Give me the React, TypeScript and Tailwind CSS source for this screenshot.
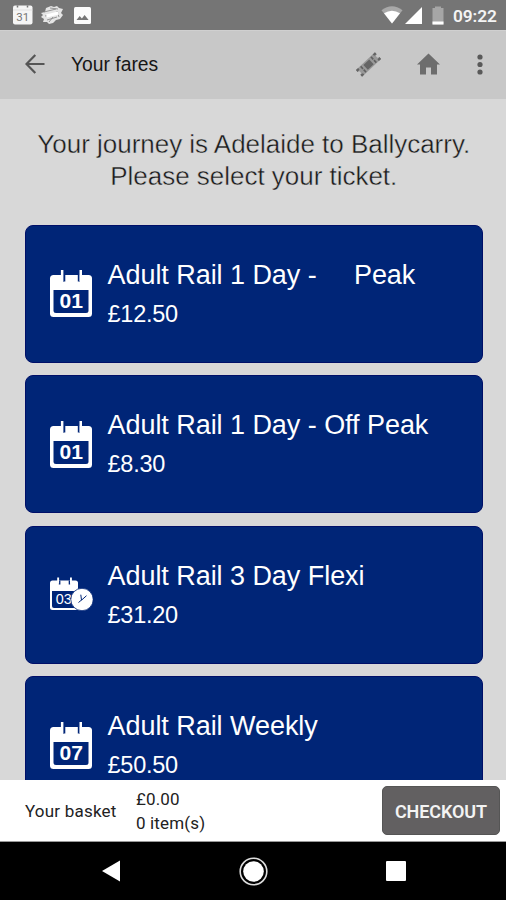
import React from "react";

const sans = "font-['Liberation_Sans',Arial,sans-serif]";
const roboto = "font-[Roboto,sans-serif]";

type Ticket = { name: string; price: string; days: string; flexi?: boolean };

const tickets: Ticket[] = [
  { name: "Adult Rail 1 Day -\u00a0\u00a0\u00a0\u00a0\u00a0Peak", price: "£12.50", days: "01" },
  { name: "Adult Rail 1 Day - Off Peak", price: "£8.30", days: "01" },
  { name: "Adult Rail 3 Day Flexi", price: "£31.20", days: "03", flexi: true },
  { name: "Adult Rail Weekly", price: "£50.50", days: "07" },
];

function CalendarIcon({ days }: { days: string }) {
  return (
    <svg width="44" height="48" viewBox="0 0 44 48">
      <rect x="1" y="5" width="42" height="42" rx="3.500" fill="#fff" />
      <path d="M4.500 20h35v20.500a2.500 2.500 0 0 1-2.500 2.500h-30a2.500 2.500 0 0 1-2.500-2.500z" fill="#002577" />
      <path d="M14 5h2.300v6.500h-2.300zM28.800 5h2v6.500h-2z" fill="#002577" />
      <path d="M11.900 0h2.500v11h-2.500zM30.500 0h2.500v11h-2.500z" fill="#fff" />
      <text x="22.300" y="38" textAnchor="middle" fill="#fff" fontSize="21" fontWeight="700" textLength="23.500" lengthAdjust="spacingAndGlyphs" className={sans}>
        {days}
      </text>
    </svg>
  );
}

function FlexiIcon({ days }: { days: string }) {
  return (
    <svg width="44" height="48" viewBox="0 0 44 48">
      <rect x="1" y="9.500" width="28" height="29.500" rx="2.500" fill="#fff" />
      <path d="M3 20h24v15a2 2 0 0 1-2 2h-20a2 2 0 0 1-2-2z" fill="#002577" />
      <path d="M9.800 9.500h1.600v4h-1.600zM19.700 9.500h1.400v4h-1.400z" fill="#002577" />
      <path d="M8.200 6.500h1.900v6h-1.900zM21 6.500h1.900v6h-1.900z" fill="#fff" />
      <text x="14.800" y="33" textAnchor="middle" fill="#fff" fontSize="14.500" textLength="16" lengthAdjust="spacingAndGlyphs" className={sans}>
        {days}
      </text>
      <circle cx="33" cy="28.500" r="11.200" fill="#fff" stroke="#002577" strokeWidth="0.800" />
      <path d="M31.800 23.700l.7 5.500L37.500 24.700M32.500 29l-3 2.500" fill="none" stroke="#002577" strokeWidth="1" />
    </svg>
  );
}

function TicketCard({ ticket }: { ticket: Ticket }) {
  return (
    <button className="flex h-[138px] w-full shrink-0 items-start rounded-lg border border-[#000f68] bg-[#002577] text-left text-white">
      <span className="mt-[44.5px] ml-[23px] block">
        {ticket.flexi ? <FlexiIcon days={ticket.days} /> : <CalendarIcon days={ticket.days} />}
      </span>
      <span className={`mt-[32px] ml-[15px] block whitespace-nowrap ${sans}`}>
        <span className="block text-[27px] leading-[34px] tracking-[-0.05px]">{ticket.name}</span>
        <span className="mt-[6px] block text-[23.5px] leading-[32px] tracking-[-0.25px]">{ticket.price}</span>
      </span>
    </button>
  );
}

function StatusBar() {
  return (
    <div className="flex h-[30px] shrink-0 items-center bg-[#757575] pr-[9px] pl-[13px] text-[#f4f4f4]">
      <svg width="20" height="20" viewBox="0 0 20 20">
        <rect x="0" y="0.500" width="19.500" height="19" rx="2" fill="#f5f5f5" />
        <path d="M0 5h19.500" stroke="#dcdcdc" strokeWidth="0.800" />
        <path d="M4.500 0.500v2M14.500 0.500v2" stroke="#757575" strokeWidth="1.500" />
        <text x="9.700" y="15.700" fontSize="11.500" textAnchor="middle" fill="#757575" className={roboto}>31</text>
      </svg>
      <svg className="ml-2" width="23" height="20" viewBox="0 0 23 20">
        <path d="M5 3l5-2 3 1 3-1 2 2 4 1-2 4 2 2-3 4-4 1-3 3-4 1-2-2-4 0 1-3-3-2 2-2-2-2 4-1z" fill="#e4e4e4" />
        <path d="M3 7l12-3M4 11l14-3M6 15l10-3M9 3l8 1M8 17l4-5M16 6l2 6" stroke="#8c8c8c" strokeWidth="0.900" />
        <path d="M5 9.500l12-3 1 3-12 3z" fill="#fff" />
      </svg>
      <svg className="ml-[10px]" width="17" height="17" viewBox="0 0 17 17">
        <rect width="17" height="17" rx="1.500" fill="#fbfbfb" />
        <path d="M2.500 13l3.200-4 2.200 2.500 2.700-3.500 4 5z" fill="#757575" />
      </svg>
      <div className="flex-1" />
      <svg width="22" height="18" viewBox="0 0 22 18">
        <path d="M0.500 4.200Q11-3.500 21.500 4.200L11 17.500z" fill="#a8a8a8" />
        <path d="M3 7.300Q11 2.200 19 7.300L11 17.500z" fill="#fff" />
      </svg>
      <svg className="ml-[2px]" width="17" height="17" viewBox="0 0 17 17">
        <path d="M17 0v17H0z" fill="#fff" />
      </svg>
      <svg className="ml-[10px]" width="12" height="19" viewBox="0 0 12 19">
        <path d="M3 2V0.500h6V2h2.500v16.500H0.500V2z" fill="#a6a6a6" />
        <path d="M0.500 15.500h11v3h-11z" fill="#fff" />
      </svg>
      <span className={`mt-[2px] ml-[9px] w-[44px] text-[17.300px] leading-5 font-semibold tracking-[-0.1px] whitespace-nowrap ${roboto}`}>09:22</span>
    </div>
  );
}

function Toolbar() {
  return (
    <header className="flex h-[69px] shrink-0 items-center border-t border-[#d0d0d0] bg-[#c8c8c8] pr-[23px] pb-[2px] pl-[25px]">
      <svg width="20" height="20" viewBox="0 0 20 20" fill="none" stroke="#555" strokeWidth="2.200">
        <path d="M19.500 10H2M10.300 1L1.500 10l8.800 9" />
      </svg>
      <h1 className={`mt-px ml-[26px] text-[19.3px] leading-6 text-[#161616] ${sans}`}>Your fares</h1>
      <div className="flex-1" />
      <svg width="27" height="27" viewBox="0 0 27 27">
        <g transform="rotate(-43 13.5 13.500)">
          <path d="M0.500 9h26v2.500a2 2 0 0 0 0 4v2.500h-26v-2.500a2 2 0 0 0 0-4z" fill="#999" />
          <path d="M0.500 9h3v2l-3 .5zM23.500 9h3v2.500l-3-.5zM0.500 15.500l3 .5v2h-3zM23.500 16l3-.5v2.500h-3z" fill="#646464" />
          <rect x="9.500" y="10.300" width="8" height="6.500" fill="#656565" />
          <path d="M6.500 9.500v8.500M20.500 9.500v8.500" stroke="#606060" strokeWidth="1.600" strokeDasharray="3.5 1" />
        </g>
      </svg>
      <svg className="ml-[35px]" width="23" height="22" viewBox="0 0 23 22">
        <path d="M11.500 0.500L23 11.500h-3V21.500h-6v-7H9v7H3v-10H0z" fill="#6d6d6d" />
      </svg>
      <svg className="ml-[37px]" width="6" height="21" viewBox="0 0 6 21" fill="#595959">
        <circle cx="3" cy="3" r="2.600" />
        <circle cx="3" cy="10.500" r="2.600" />
        <circle cx="3" cy="18" r="2.600" />
      </svg>
    </header>
  );
}

export default function App() {
  return (
    <div className="flex h-[900px] w-[506px] flex-col overflow-hidden bg-[#d8d8d8]">
      <StatusBar />
      <Toolbar />
      <main className="min-h-0 flex-1 overflow-hidden pr-[23px] pl-[24.5px]">
        <h2 className={`-mx-3 mt-[29px] text-center text-[26px] leading-8 tracking-[-0.02px] whitespace-nowrap text-[#1c1c1c] [-webkit-text-stroke:0.4px_#d8d8d8] ${sans}`}>
          Your journey is Adelaide to Ballycarry.
          <br />
          Please select your ticket.
        </h2>
        <div className="mt-[32.5px] flex flex-col gap-[12.5px]">
          {tickets.map((t) => (
            <TicketCard key={t.name} ticket={t} />
          ))}
        </div>
      </main>
      <footer className={`flex h-[62px] shrink-0 items-center border-b border-[#999] bg-white pr-[6px] pl-[25px] text-[#222] ${roboto}`}>
        <span className="w-[111px] text-[17px] leading-6 tracking-[0.2px]">Your basket</span>
        <span className="mt-px text-[17px] leading-6 tracking-[0.15px]">
          £0.00
          <br />0 item(s)
        </span>
        <button className="ml-auto h-[49px] w-[118px] rounded-[5px] border border-[#555] bg-[#626061] pt-px text-[18px] font-semibold tracking-[-0.1px] text-[#f3f3f3]">
          CHECKOUT
        </button>
      </footer>
      <nav className="flex h-[58px] shrink-0 items-center bg-black pl-[102px]">
        <svg width="18" height="22" viewBox="0 0 18 22">
          <path d="M18 0.500v21L0 11z" fill="#fff" />
        </svg>
        <svg className="ml-[119px]" width="29" height="29" viewBox="0 0 29 29">
          <circle cx="14.500" cy="14.500" r="13.300" fill="none" stroke="#ddd" strokeWidth="1.600" />
          <circle cx="14.500" cy="14.500" r="10.300" fill="#fff" />
        </svg>
        <span className="ml-[118px] size-[20px] rounded-[1px] bg-white" />
      </nav>
    </div>
  );
}
